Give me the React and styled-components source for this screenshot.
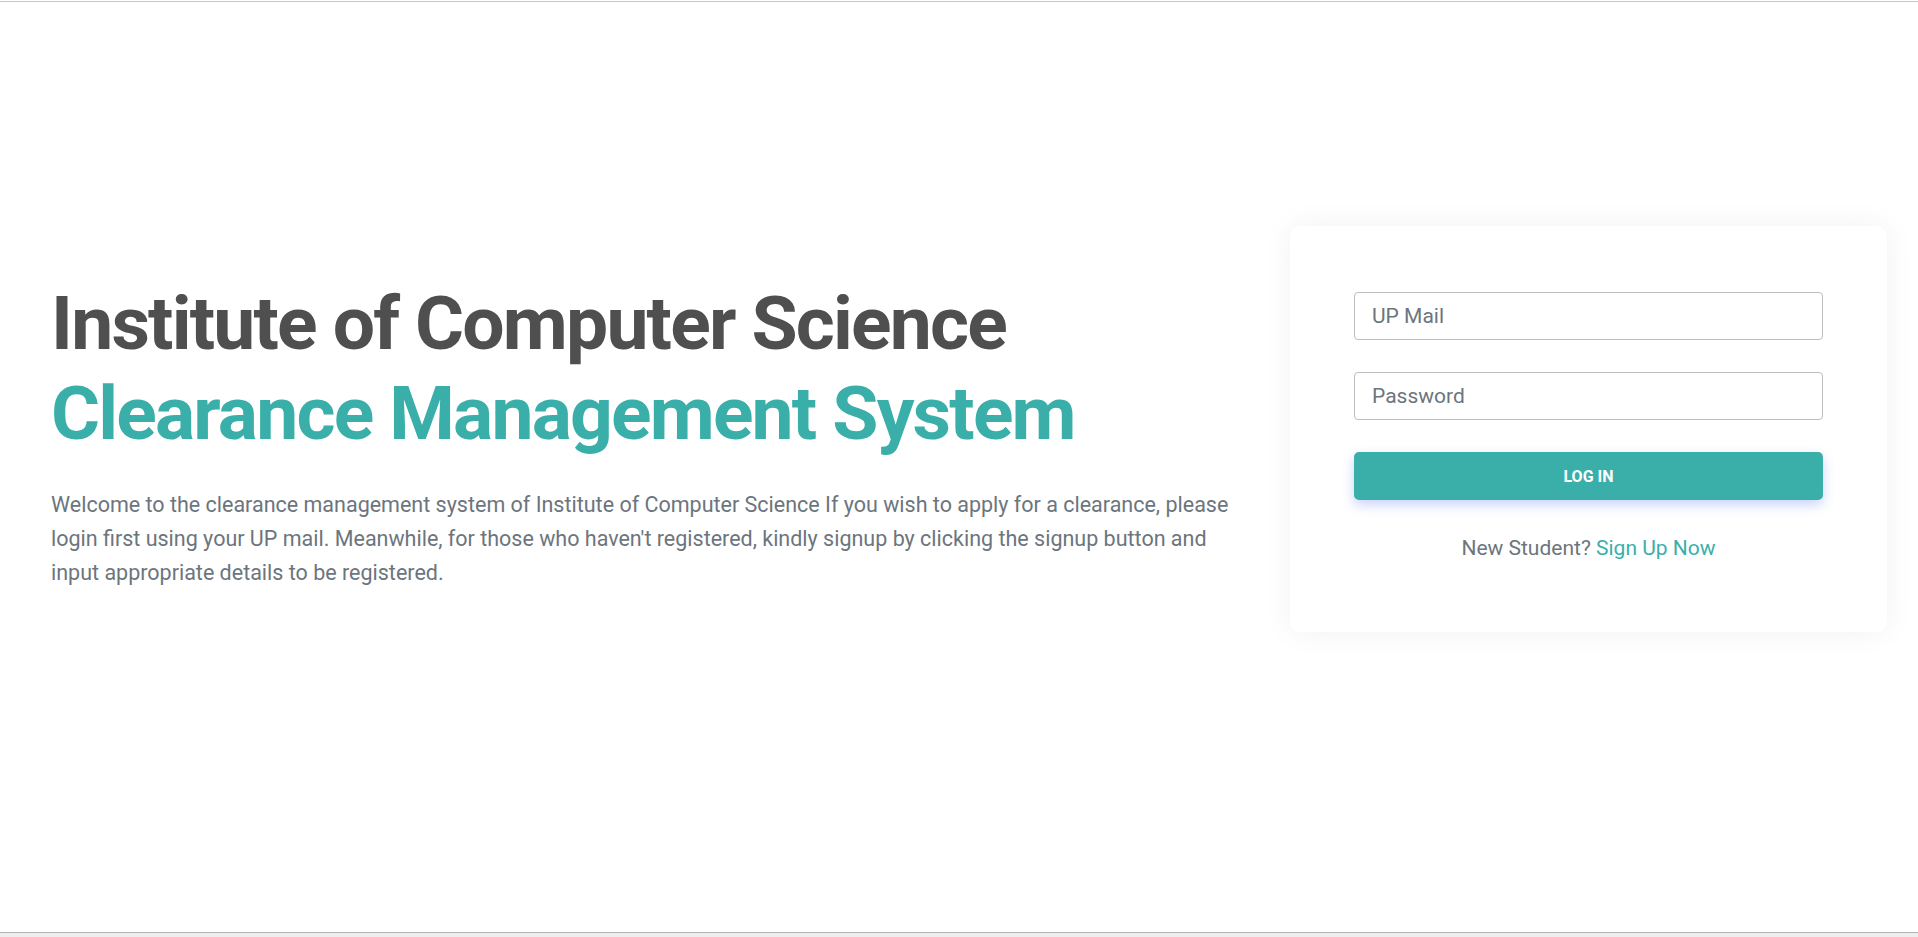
import React from "react";
import styled, { createGlobalStyle } from "styled-components";

const GlobalStyle = createGlobalStyle`
  html, body {
    margin: 0;
    padding: 0;
    background: #ffffff;
    font-family: Roboto, "Noto Sans", Arial, sans-serif;
  }
  * {
    box-sizing: border-box;
  }
`;

const Page = styled.div`
  display: flex;
  flex-direction: column;
  height: 937px;
  overflow: hidden;
`;

const TopRule = styled.div`
  height: 2px;
  border-top: 1px solid #ffffff;
  border-bottom: 1px solid #c8c8c8;
`;

const BottomRule = styled.div`
  height: 5px;
  background: #eeeeee;
  border-top: 1px solid #b4b4b4;
`;

const Main = styled.main`
  flex: 1;
  display: flex;
  align-items: center;
  padding: 0 31px 76px 51px;
`;

const Intro = styled.section`
  flex: 1;
  padding: 10px 50px 0 0;
`;

const Title = styled.h1`
  margin: 0;
  font-size: 75px;
  line-height: 90px;
  font-weight: 700;
  letter-spacing: -1.8px;
  color: ${(p) => (p.$accent ? "#3aafa9" : "#4f4f4f")};
`;

const Lead = styled.p`
  margin: 30px 0 0;
  font-size: 21.5px;
  line-height: 34px;
  color: #6c757d;
`;

const Card = styled.div`
  width: 597px;
  padding: 66px 64px 71px;
  background: #ffffff;
  border-radius: 10px;
  box-shadow: 0 0 30px rgba(0, 0, 0, 0.06);
`;

const Field = styled.input`
  display: block;
  width: 100%;
  height: 48px;
  margin-bottom: 32px;
  padding: 0 17px;
  border: 1px solid #bdbdbd;
  border-radius: 4px;
  font-family: Roboto, Arial, sans-serif;
  font-size: 21px;
  color: #495057;
  outline: none;

  &::placeholder {
    color: #6c757d;
  }
`;

const LoginButton = styled.button`
  display: block;
  width: 100%;
  height: 48px;
  border: none;
  border-radius: 5px;
  background: #3aafa9;
  color: #ffffff;
  font-family: Roboto, Arial, sans-serif;
  font-size: 16px;
  font-weight: 700;
  text-transform: uppercase;
  box-shadow: 0 5px 12px rgba(70, 100, 230, 0.28);
  cursor: pointer;
`;

const SignupLine = styled.p`
  margin: 35px 0 0;
  text-align: center;
  font-size: 21px;
  line-height: 26px;
  color: #6c757d;
`;

const SignupLink = styled.a`
  color: #3aafa9;
  text-decoration: none;
`;

const App = () => {
  return (
    <>
      <GlobalStyle />
      <Page>
        <TopRule />
        <Main>
          <Intro>
            <Title>Institute of Computer Science</Title>
            <Title $accent>Clearance Management System</Title>
            <Lead>
              Welcome to the clearance management system of Institute of Computer
              Science If you wish to apply for a clearance, please login first using
              your UP mail. Meanwhile, for those who haven't registered, kindly signup
              by clicking the signup button and input appropriate details to be
              registered.
            </Lead>
          </Intro>
          <Card>
            <Field type="email" placeholder="UP Mail" />
            <Field type="password" placeholder="Password" />
            <LoginButton>Log In</LoginButton>
            <SignupLine>
              New Student? <SignupLink href="#">Sign Up Now</SignupLink>
            </SignupLine>
          </Card>
        </Main>
        <BottomRule />
      </Page>
    </>
  );
};

export default App;
